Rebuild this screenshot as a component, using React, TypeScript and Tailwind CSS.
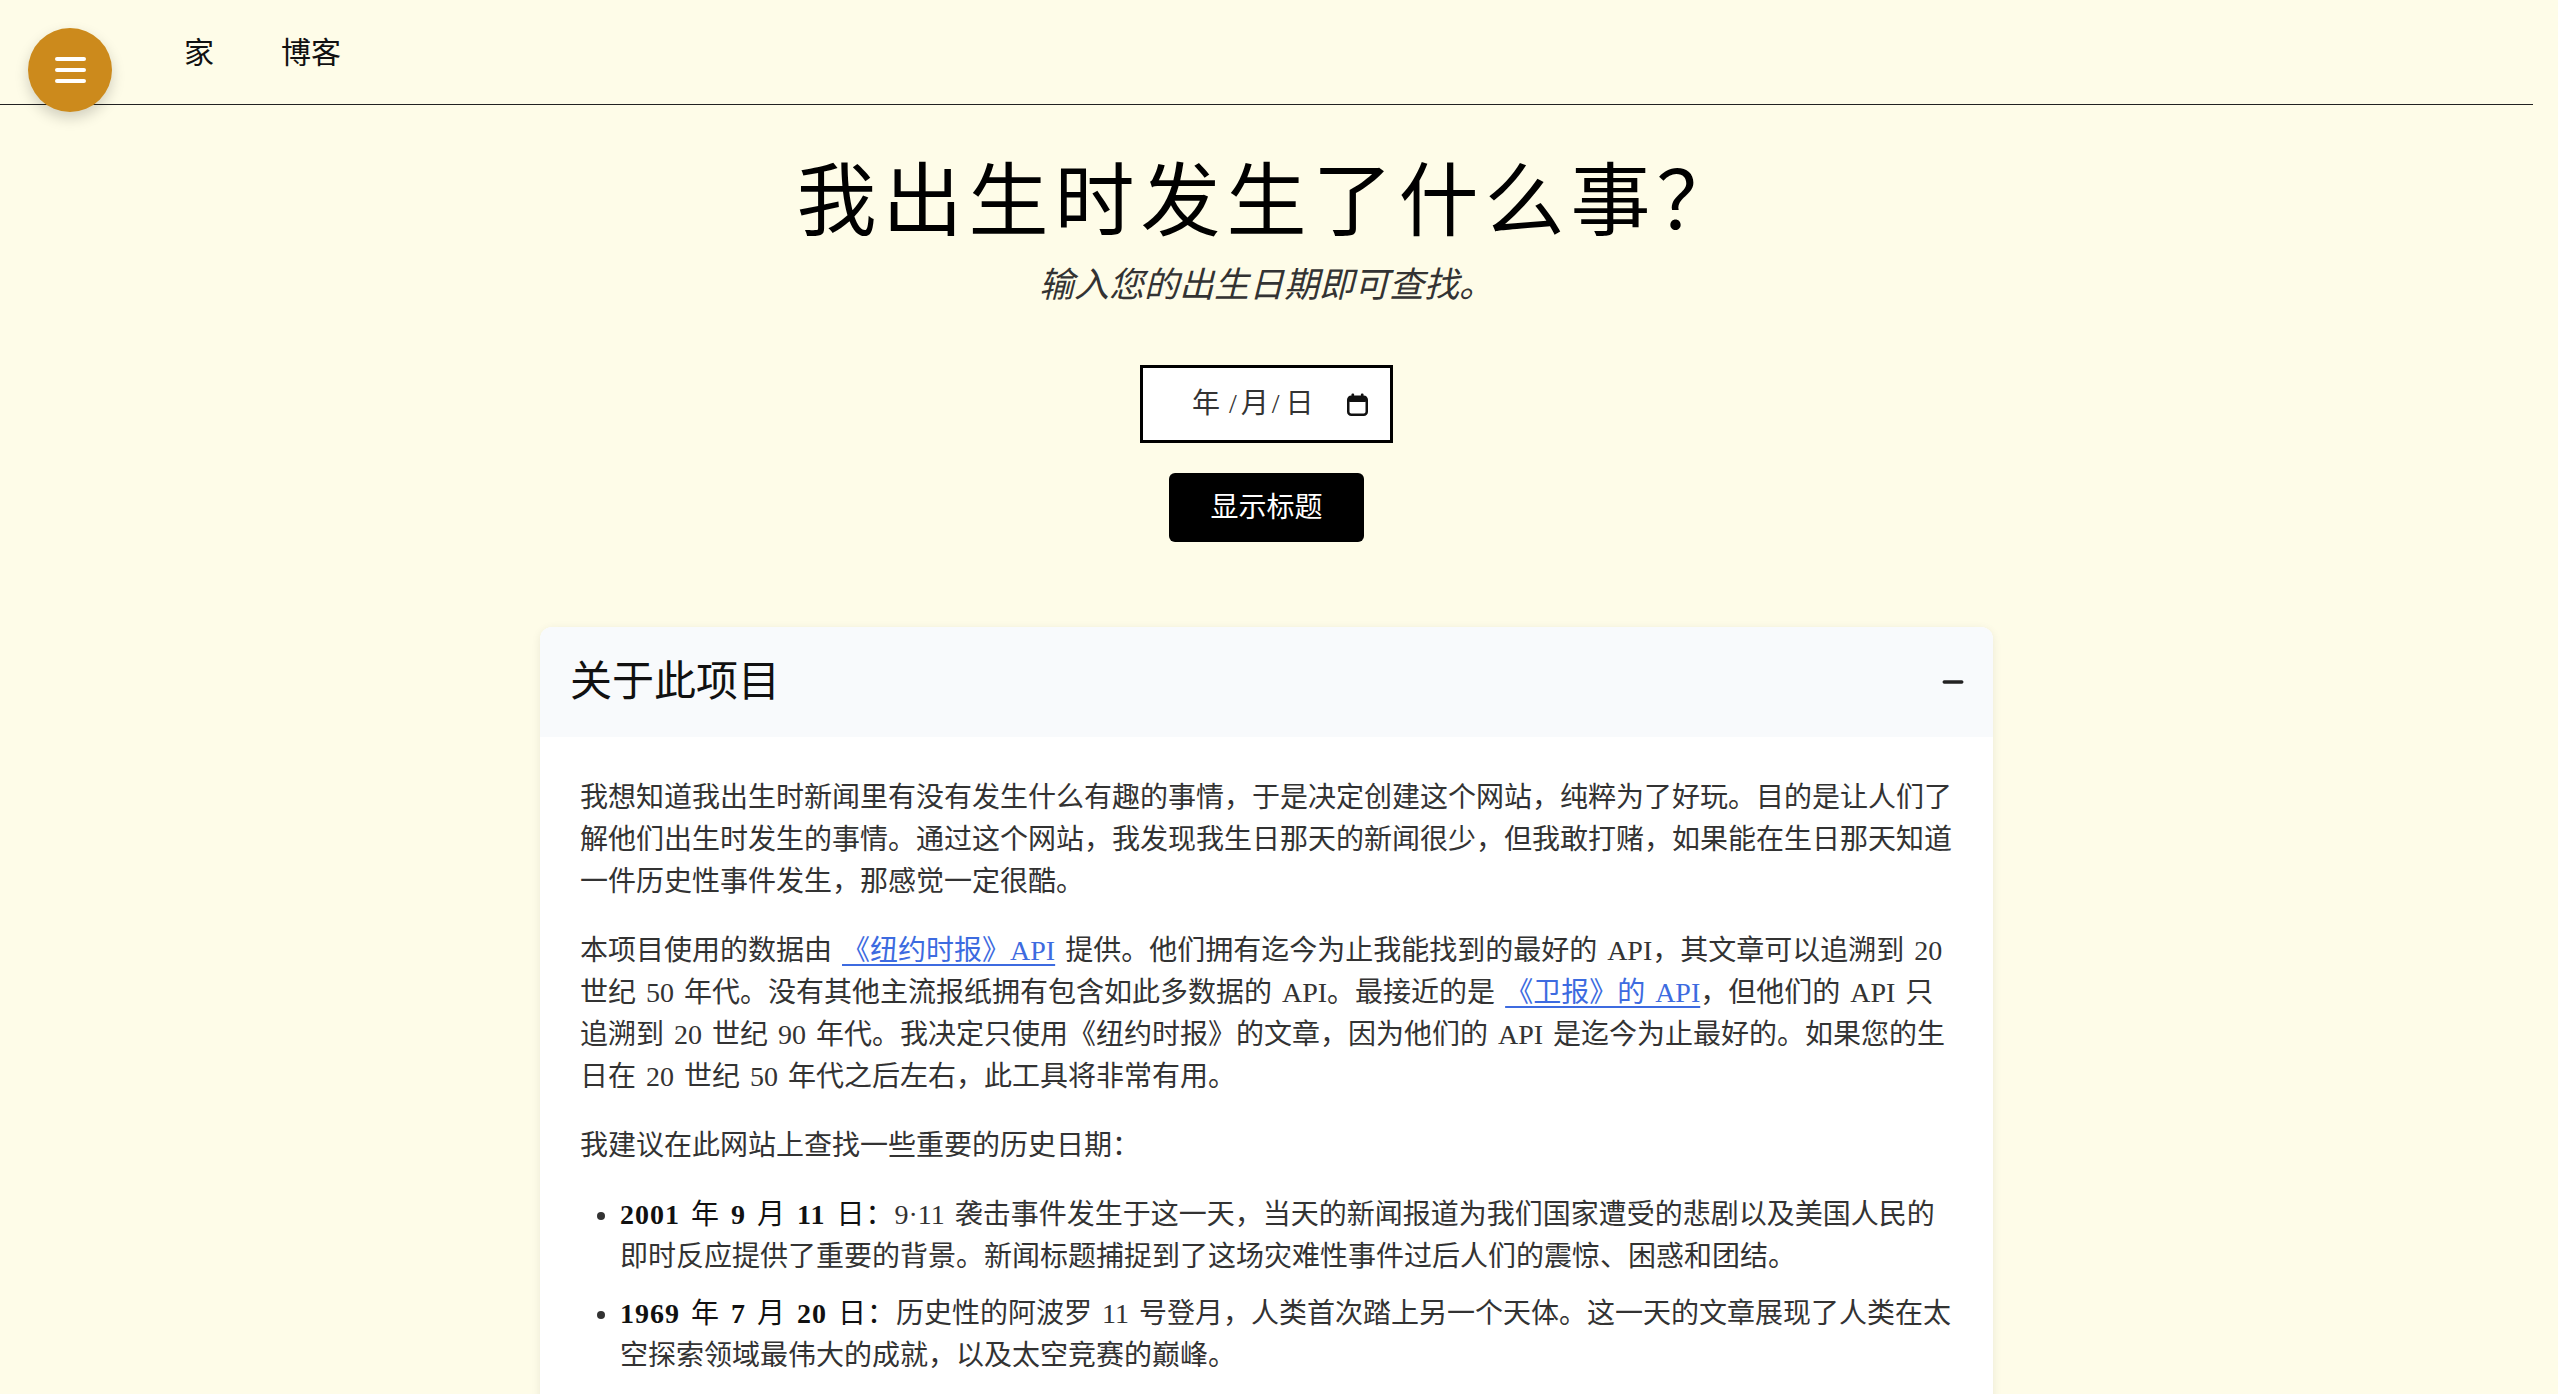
import React from 'react';
import { Minus } from 'lucide-react';

const serif = "font-['Liberation_Serif','Noto_Sans_CJK_SC',serif]";

// Chrome-style calendar glyph shown at the end of the date field
function CalendarGlyph() {
  return (
    <svg width="21" height="23" viewBox="0 0 21 23" className="text-[#111]">
      <rect x="1.25" y="3.75" width="18.5" height="18" rx="3" fill="none" stroke="currentColor" strokeWidth="2.5" />
      <rect x="1" y="3.5" width="19" height="5.5" rx="2" fill="currentColor" />
      <rect x="4.5" y="0.5" width="2.6" height="4.5" rx="1" fill="currentColor" />
      <rect x="13.9" y="0.5" width="2.6" height="4.5" rx="1" fill="currentColor" />
    </svg>
  );
}

type Milestone = { y: string; m: string; d: string; text: string };

const milestones: Milestone[] = [
  {
    y: '2001',
    m: '9',
    d: '11',
    text: '9·11 袭击事件发生于这一天，当天的新闻报道为我们国家遭受的悲剧以及美国人民的即时反应提供了重要的背景。新闻标题捕捉到了这场灾难性事件过后人们的震惊、困惑和团结。',
  },
  {
    y: '1969',
    m: '7',
    d: '20',
    text: '历史性的阿波罗 11 号登月，人类首次踏上另一个天体。这一天的文章展现了人类在太空探索领域最伟大的成就，以及太空竞赛的巅峰。',
  },
  {
    y: '1963',
    m: '11',
    d: '22',
    text: '约翰·F·肯尼迪总统在达拉斯遇刺。当天的报道记录了全国上下的震惊与哀悼，以及这一事件对美国政治产生的深远影响。',
  },
  {
    y: '1989',
    m: '11',
    d: '9',
    text: '柏林墙倒塌，标志着冷战走向终结。这一天的新闻捕捉到了东西德人民重聚的喜悦，以及欧洲格局即将发生的巨变。',
  },
  {
    y: '1986',
    m: '1',
    d: '28',
    text: '挑战者号航天飞机在发射后不久解体，七名宇航员全部遇难。当天的报道反映了全国的悲痛，以及人们对太空探索风险的反思。',
  },
  {
    y: '2008',
    m: '11',
    d: '4',
    text: '巴拉克·奥巴马当选为美国第一位非裔总统。当天的新闻标题记录了这一历史性时刻，以及世界各地人们的反应。',
  },
];

export default function App() {
  return (
    <div className={`min-h-screen bg-[#fefce8] pr-[25px] text-[#222] ${serif}`}>
      {/* Floating menu button */}
      <button className="fixed left-[28px] top-[28px] z-10 flex h-[84px] w-[84px] flex-col items-center justify-center gap-[7px] rounded-full bg-[#cc8a1c] shadow-[0_6px_14px_rgba(0,0,0,0.18)]">
        <span className="block h-[4px] w-[31px] rounded-full bg-white" />
        <span className="block h-[4px] w-[31px] rounded-full bg-white" />
        <span className="block h-[4px] w-[31px] rounded-full bg-white" />
      </button>

      {/* Top navigation */}
      <header className="flex h-[105px] items-center gap-[67px] border-b border-[#222] pl-[184px] text-[30px] text-[#111]">
        <a href="#">家</a>
        <a href="#">博客</a>
      </header>

      <main className="flex flex-col items-center pb-[120px]">
        <h1 className="mt-[57px] pl-[6px] text-[80px] leading-none tracking-[6px] font-normal text-black">
          我出生时发生了什么事？
        </h1>
        <p className="mt-[26px] text-[35px] leading-none italic text-[#333]">输入您的出生日期即可查找。</p>

        {/* Date field */}
        <div className="mt-[62px] flex h-[78px] w-[253px] items-center justify-between border-[3px] border-black bg-white pl-[49px] pr-[22px] text-[28px] text-[#333]">
          <span className="flex items-center">
            <span>年</span>
            <span className="ml-[9px]">/</span>
            <span className="ml-[4px]">月</span>
            <span className="ml-[3px]">/</span>
            <span className="ml-[6px]">日</span>
          </span>
          <CalendarGlyph />
        </div>

        <button className="mt-[30px] flex h-[69px] w-[195px] items-center justify-center rounded-md bg-black text-[28px] text-white">
          显示标题
        </button>

        {/* About card */}
        <section className="mt-[85px] w-[1453px] overflow-hidden rounded-xl bg-white shadow-[0_2px_10px_rgba(0,0,0,0.08)]">
          <div className="flex h-[110px] items-center justify-between bg-[#f8fafc] pl-[30px] pr-[25px]">
            <h2 className="text-[42px] text-[#111]">关于此项目</h2>
            <Minus size={30} strokeWidth={2.8} className="text-[#222]" />
          </div>

          <div className="px-10 pt-10 pb-12 text-[28px] leading-[42px] text-[#333] [word-spacing:3px]">
            <p>
              我想知道我出生时新闻里有没有发生什么有趣的事情，于是决定创建这个网站，纯粹为了好玩。目的是让人们了解他们出生时发生的事情。通过这个网站，我发现我生日那天的新闻很少，但我敢打赌，如果能在生日那天知道一件历史性事件发生，那感觉一定很酷。
            </p>
            <p className="mt-[27px]">
              本项目使用的数据由{' '}
              <a href="#" className="text-[#3d6be0] underline underline-offset-4">
                《纽约时报》API
              </a>{' '}
              提供。他们拥有迄今为止我能找到的最好的 API，其文章可以追溯到 20 世纪 50 年代。没有其他主流报纸拥有包含如此多数据的 API。最接近的是{' '}
              <a href="#" className="text-[#3d6be0] underline underline-offset-4">
                《卫报》的 API
              </a>
              ，但他们的 API 只追溯到 20 世纪 90 年代。我决定只使用《纽约时报》的文章，因为他们的 API 是迄今为止最好的。如果您的生日在 20 世纪 50 年代之后左右，此工具将非常有用。
            </p>
            <p className="mt-[27px]">我建议在此网站上查找一些重要的历史日期：</p>

            <ul className="mt-[27px] flex list-disc flex-col gap-[15px] pl-10">
              {milestones.map((m) => (
                <li key={m.y}>
                  <strong className="font-bold tracking-[1px] text-[#111]">
                    {m.y} <span className="font-normal">年</span> {m.m} <span className="font-normal">月</span> {m.d}{' '}
                    <span className="font-normal">日：</span>
                  </strong>
                  {m.text}
                </li>
              ))}
            </ul>

            <p className="mt-[27px]">试试输入您自己的生日，看看那天的头条新闻都报道了些什么吧！</p>
          </div>
        </section>
      </main>
    </div>
  );
}
